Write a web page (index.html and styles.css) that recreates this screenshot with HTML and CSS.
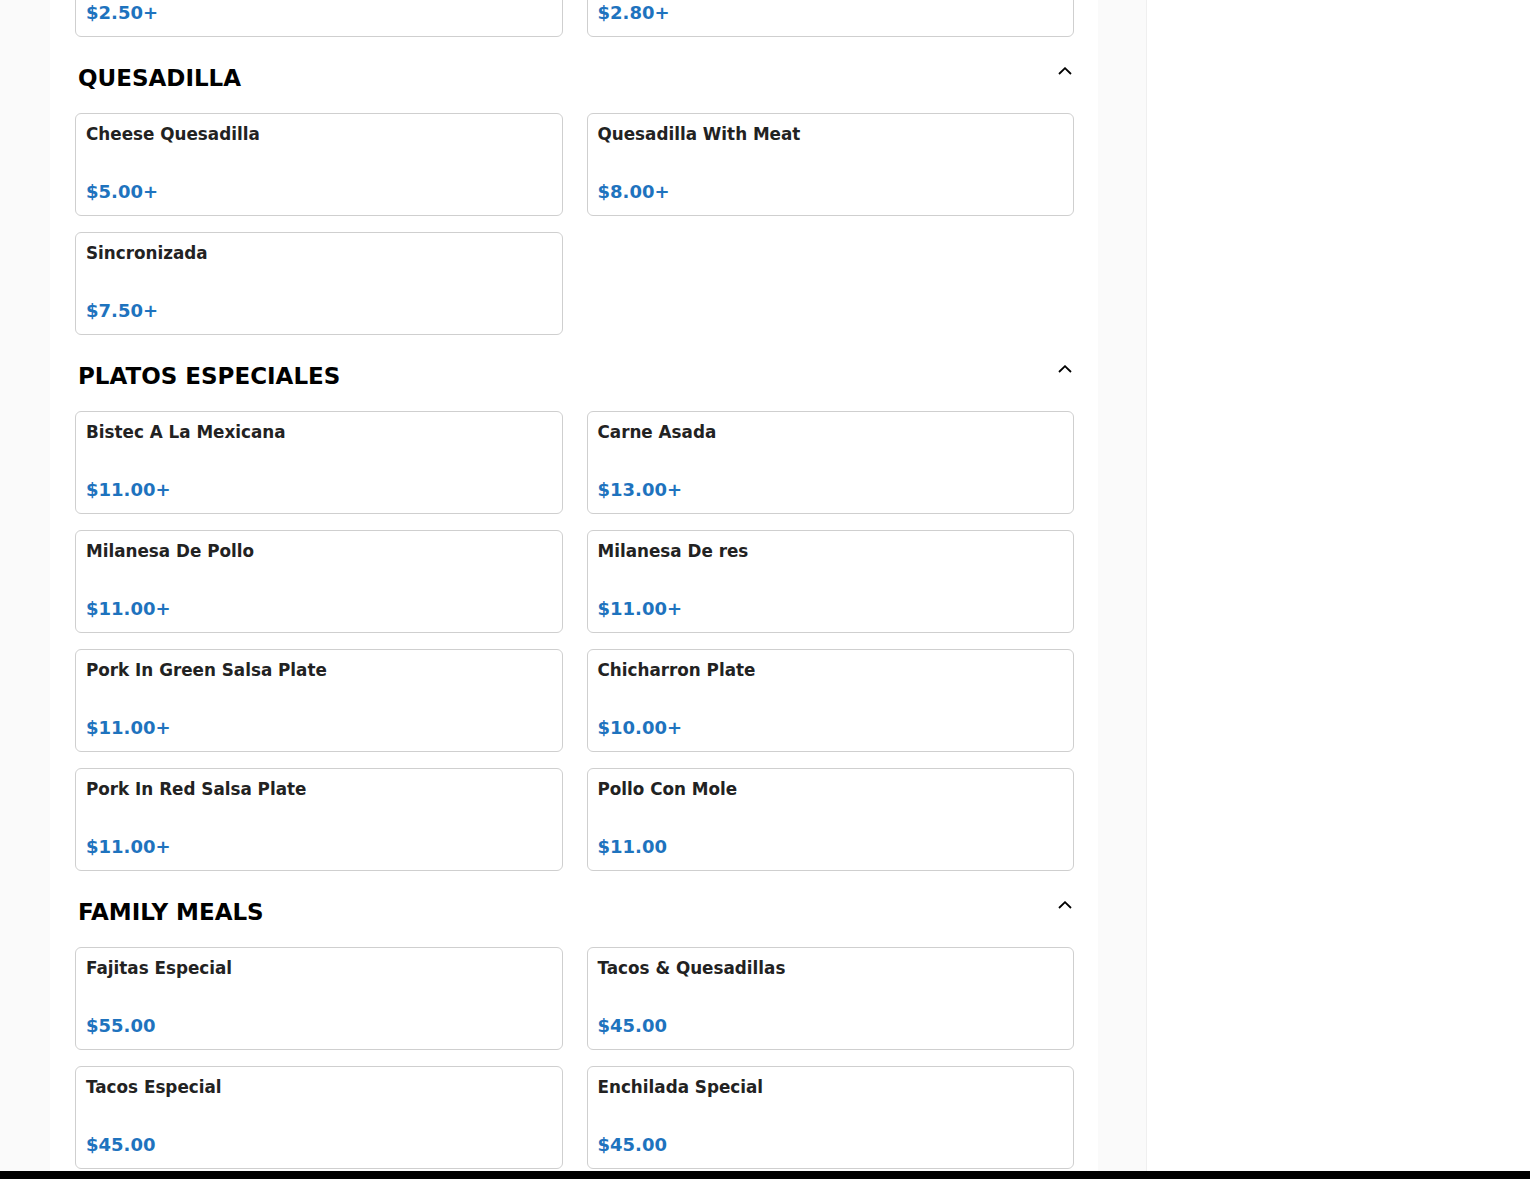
FILE: index.html
```html
<!DOCTYPE html>
<html lang="en">
<head>
<meta charset="utf-8">
<title>Menu</title>
<link rel="stylesheet" href="styles.css">
</head>
<body>
<div class="page">
  <main class="menu">
    <div class="grid grid-top">
      <div class="card"><div class="name"></div><div class="price">$2.50+</div></div>
      <div class="card"><div class="name"></div><div class="price">$2.80+</div></div>
    </div>

    <section class="section">
      <div class="section-head">
        <h2>QUESADILLA</h2>
        <svg class="chev" width="14" height="8" viewBox="0 0 14 8"><path d="M1 7 L7 1.2 L13 7" fill="none" stroke="#000" stroke-width="1.8"/></svg>
      </div>
      <div class="grid">
        <div class="card"><div class="name">Cheese Quesadilla</div><div class="price">$5.00+</div></div>
        <div class="card"><div class="name">Quesadilla With Meat</div><div class="price">$8.00+</div></div>
        <div class="card"><div class="name">Sincronizada</div><div class="price">$7.50+</div></div>
      </div>
    </section>

    <section class="section">
      <div class="section-head">
        <h2>PLATOS ESPECIALES</h2>
        <svg class="chev" width="14" height="8" viewBox="0 0 14 8"><path d="M1 7 L7 1.2 L13 7" fill="none" stroke="#000" stroke-width="1.8"/></svg>
      </div>
      <div class="grid">
        <div class="card"><div class="name">Bistec A La Mexicana</div><div class="price">$11.00+</div></div>
        <div class="card"><div class="name">Carne Asada</div><div class="price">$13.00+</div></div>
        <div class="card"><div class="name">Milanesa De Pollo</div><div class="price">$11.00+</div></div>
        <div class="card"><div class="name">Milanesa De res</div><div class="price">$11.00+</div></div>
        <div class="card"><div class="name">Pork In Green Salsa Plate</div><div class="price">$11.00+</div></div>
        <div class="card"><div class="name">Chicharron Plate</div><div class="price">$10.00+</div></div>
        <div class="card"><div class="name">Pork In Red Salsa Plate</div><div class="price">$11.00+</div></div>
        <div class="card"><div class="name">Pollo Con Mole</div><div class="price">$11.00</div></div>
      </div>
    </section>

    <section class="section">
      <div class="section-head">
        <h2>FAMILY MEALS</h2>
        <svg class="chev" width="14" height="8" viewBox="0 0 14 8"><path d="M1 7 L7 1.2 L13 7" fill="none" stroke="#000" stroke-width="1.8"/></svg>
      </div>
      <div class="grid">
        <div class="card"><div class="name">Fajitas Especial</div><div class="price">$55.00</div></div>
        <div class="card"><div class="name">Tacos &amp; Quesadillas</div><div class="price">$45.00</div></div>
        <div class="card"><div class="name">Tacos Especial</div><div class="price">$45.00</div></div>
        <div class="card"><div class="name">Enchilada Special</div><div class="price">$45.00</div></div>
      </div>
    </section>
  </main>
  <div class="gap"></div>
  <aside class="aside"></aside>
</div>
<div class="bottom-bar"></div>
</body>
</html>
```

FILE: styles.css
```css
html, body {
  margin: 0;
  padding: 0;
}
body {
  background: #fafafa;
  font-family: "DejaVu Sans", sans-serif;
  overflow: hidden;
  height: 1179px;
}
.page {
  display: flex;
  align-items: stretch;
  min-height: 1179px;
}
.menu {
  width: 1048px;
  margin-left: 50px;
  background: #ffffff;
  padding: 0 24px 40px 25px;
  box-sizing: border-box;
}
.gap {
  width: 48px;
  background: #fafafa;
}
.aside {
  flex: 1;
  background: #ffffff;
  border-left: 1px solid #efefef;
}
.grid {
  display: grid;
  grid-template-columns: 1fr 1fr;
  column-gap: 24px;
  row-gap: 16px;
}
.grid-top {
  margin-top: -66px;
}
.card {
  height: 103px;
  box-sizing: border-box;
  border: 1px solid #cfcfcf;
  border-radius: 6px;
  padding: 11px 10px 13px 10px;
  display: flex;
  flex-direction: column;
  justify-content: space-between;
  background: #fff;
}
.name {
  font-size: 16.8px;
  line-height: 18px;
  min-height: 18px;
  font-weight: bold;
  color: #222;
}
.price {
  font-size: 18px;
  font-weight: bold;
  color: #1e73be;
}
.section-head {
  display: flex;
  justify-content: space-between;
  align-items: flex-start;
  margin-top: 27px;
  margin-bottom: 21px;
  padding: 0 2px 0 3px;
}
.section-head h2 {
  margin: 0;
  font-size: 23px;
  line-height: 28px;
  font-weight: bold;
  color: #000;
}
.chev {
  margin-top: 3px;
  display: block;
}
.bottom-bar {
  position: fixed;
  left: 0;
  right: 0;
  bottom: 0;
  height: 8px;
  background: #000;
}
```
